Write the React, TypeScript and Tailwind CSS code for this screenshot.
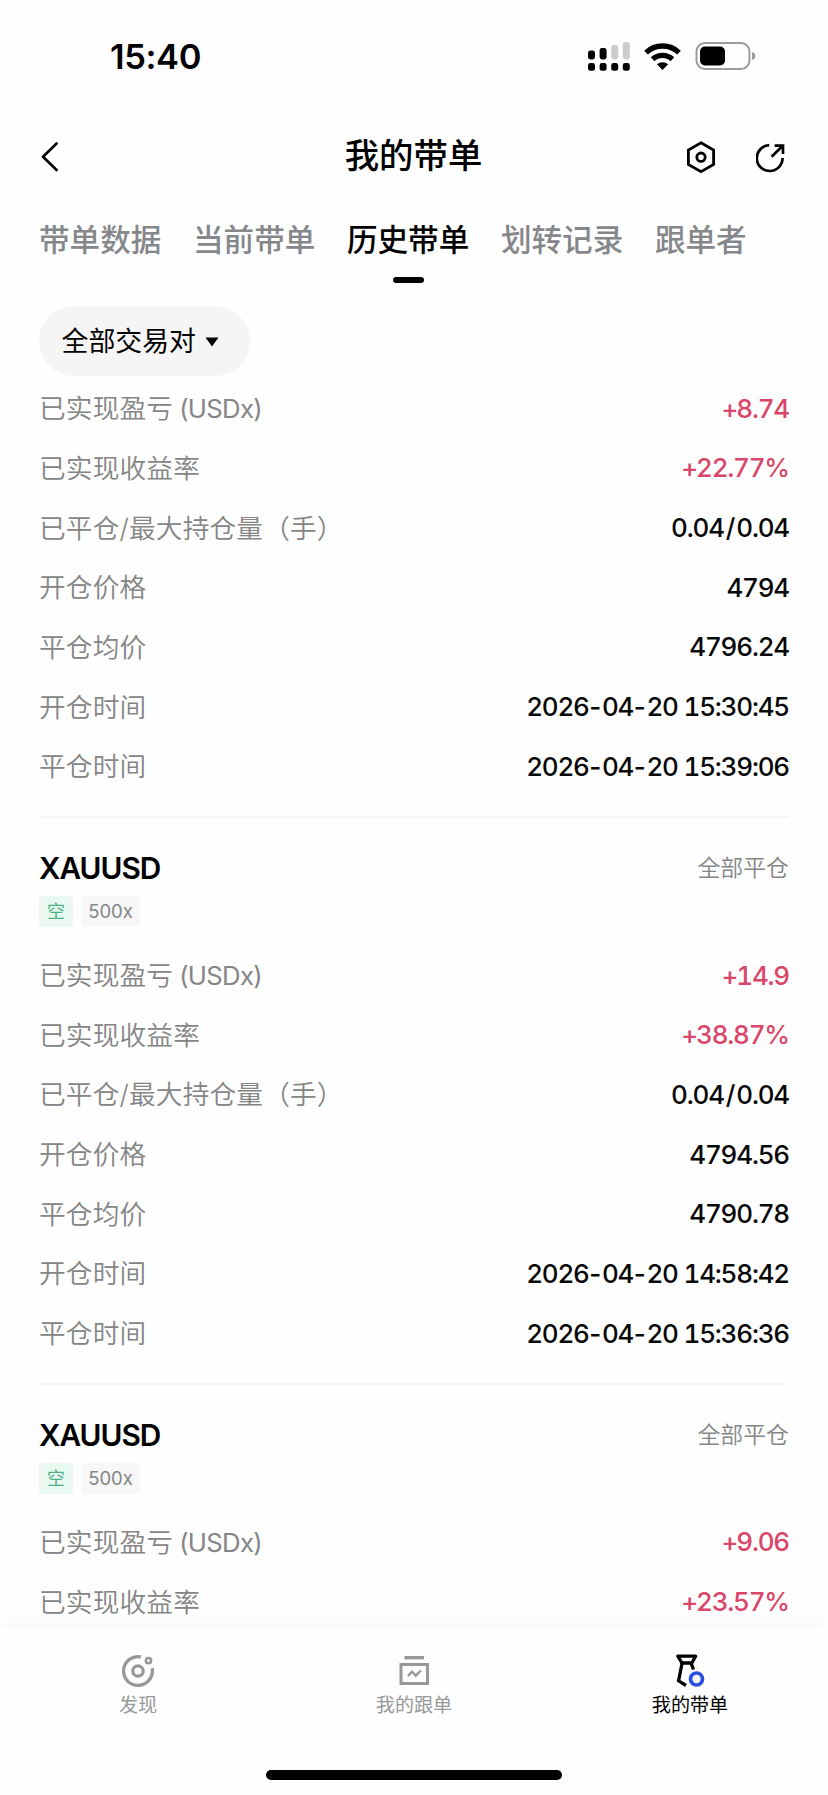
import React from "react";

const tabs = ["带单数据", "当前带单", "历史带单", "划转记录", "跟单者"];

const orders = [
  {
    symbol: "XAUUSD",
    side: "空",
    leverage: "500x",
    status: "全部平仓",
    pnl: "+8.74",
    roi: "+22.77%",
    volume: "0.04/0.04",
    openPrice: "4794",
    closePrice: "4796.24",
    openTime: "2026-04-20 15:30:45",
    closeTime: "2026-04-20 15:39:06",
  },
  {
    symbol: "XAUUSD",
    side: "空",
    leverage: "500x",
    status: "全部平仓",
    pnl: "+14.9",
    roi: "+38.87%",
    volume: "0.04/0.04",
    openPrice: "4794.56",
    closePrice: "4790.78",
    openTime: "2026-04-20 14:58:42",
    closeTime: "2026-04-20 15:36:36",
  },
  {
    symbol: "XAUUSD",
    side: "空",
    leverage: "500x",
    status: "全部平仓",
    pnl: "+9.06",
    roi: "+23.57%",
  },
];

type Order = (typeof orders)[number];

function StatusBar() {
  return (
    <div className="flex h-28 shrink-0 items-start justify-between pt-[33px] pr-[72px] pl-[110px]">
      <span className="text-[34.5px] leading-[48px] font-semibold tracking-[-0.4px]">
        15:40
      </span>
      <div className="flex h-[46px] items-center">
        <svg width="42" height="30" viewBox="0 0 42 30" className="mr-[14px]">
          <rect x="0" y="9.5" width="7" height="9" rx="2.4" />
          <rect x="11.6" y="7" width="7" height="11.5" rx="2.4" />
          <rect x="23.2" y="4" width="7" height="14.5" rx="2.4" fill="#cbcbcb" />
          <rect x="34.8" y="1" width="7" height="17.5" rx="2.4" fill="#cbcbcb" />
          <rect x="0" y="22" width="7" height="7.8" rx="2.4" />
          <rect x="11.6" y="22" width="7" height="7.8" rx="2.4" />
          <rect x="23.2" y="22" width="7" height="7.8" rx="2.4" />
          <rect x="34.8" y="22" width="7" height="7.8" rx="2.4" />
        </svg>
        <svg width="37" height="27" viewBox="0 0 37 27" className="mr-[14px]">
          <path
            d="M2 9.6a24 24 0 0 1 33 0M8.6 16.2a14.6 14.6 0 0 1 19.8 0"
            fill="none"
            stroke="#000"
            strokeWidth="5.4"
          />
          <path d="M18.5 27l-5.6-5.7a8.4 8.4 0 0 1 11.2 0z" />
        </svg>
        <svg width="61" height="28" viewBox="0 0 61 28">
          <rect x="1.5" y="1" width="53" height="26" rx="8.5" fill="none" stroke="#9b9b9b" strokeWidth="2" />
          <rect x="5" y="4.6" width="25" height="18.8" rx="5" />
          <path d="M57 10c4.6 1.2 4.6 6.8 0 8z" fill="#9b9b9b" />
        </svg>
      </div>
    </div>
  );
}

function Header() {
  return (
    <div className="grid h-[90px] shrink-0 grid-cols-3 items-center pr-[42px] pl-[41px]">
      <svg width="18" height="30" viewBox="0 0 18 30" fill="none" stroke="#000" strokeWidth="2.6" strokeLinecap="round" strokeLinejoin="round">
        <path d="M15.6 1.5L2 14.8L15.6 28" />
      </svg>
      <h1 className="pb-0.5 text-center text-[34.4px] leading-[48px] font-medium">我的带单</h1>
      <div className="flex items-center justify-end gap-[39px]">
        <svg width="32" height="34" viewBox="0 0 32 34" fill="none" stroke="#000" strokeWidth="2.8">
          <path d="M16 2.8L28.6 10V24.4L16 31.6L3.4 24.4V10Z" />
          <circle cx="16" cy="17.2" r="4.2" />
        </svg>
        <svg width="30" height="34" viewBox="0.8 0 30 34" fill="none" stroke="#000" strokeWidth="2.7">
          <path d="M14 5.2A12.9 12.9 0 1 0 27.4 18" />
          <path d="M16.4 16.8L27 6.2M19.4 5.6H27.8V14" />
        </svg>
      </div>
    </div>
  );
}

function Tabs() {
  return (
    <div className="flex h-[92px] shrink-0 gap-[31.6px] pt-[14.5px] pl-[39px]">
      {tabs.map((tab) => {
        const active = tab === "历史带单";
        return (
          <div key={tab} className="flex flex-col items-center">
            <span
              className={`text-[30.6px] leading-[46px] font-medium ${active ? "text-black" : "text-[#85878b]"}`}
            >
              {tab}
            </span>
            {active && <div className="mt-[14.5px] h-1.5 w-[31px] rounded-full bg-black" />}
          </div>
        );
      })}
    </div>
  );
}

// spacing of the signs that sit between the tabular digits
const signClass: Record<string, string> = {
  "-": "proportional-nums tracking-[0.6px] ml-[0.6px]",
  "/": "mx-0.5",
  "+": "tracking-[-2px]",
};

function Row({
  label,
  unit,
  value = "",
  red,
}: {
  label: string;
  unit?: string;
  value?: string;
  red?: boolean;
}) {
  return (
    <div className="flex h-[59.7px] items-center justify-between">
      <span className="text-[26.7px] font-[350] tracking-[0.15px] text-[#858585]">
        {label}
        {unit && <span className="ml-1.5 text-[25.7px] font-normal tracking-[-0.7px]">{unit}</span>}
      </span>
      <span
        className={`text-[26px] font-[450] tracking-[-1.2px] whitespace-pre tabular-nums ${red ? "text-[#d9466a]" : "text-[#080808]"}`}
      >
        {value.split(/([-+/])/).map((part, i) => (
          <span key={i} className={signClass[part]}>
            {part}
          </span>
        ))}
      </span>
    </div>
  );
}

function OrderHead({ order }: { order: Order }) {
  return (
    <div className="flex h-[127px] items-start justify-between pt-[29px]">
      <div>
        <h2 className="text-[29.8px] leading-[42px] font-semibold tracking-[-1px]">
          {order.symbol}
        </h2>
        <div className="mt-[7px] flex gap-2">
          <span className="flex h-[31px] w-[34px] items-center justify-center rounded-[3px] bg-[#eaf8f2] text-[18px] text-[#4db184]">
            {order.side}
          </span>
          <span className="flex h-[31px] w-[59px] items-center justify-center rounded-[5px] bg-[#f7f7f8] text-[18.5px] text-[#858585]">
            {order.leverage}
          </span>
        </div>
      </div>
      <span className="text-[22.9px] leading-[42px] font-[350] text-[#858585]">{order.status}</span>
    </div>
  );
}

function OrderRows({ order }: { order: Order }) {
  return (
    <div>
      <Row label="已实现盈亏" unit="(USDx)" value={order.pnl} red />
      <Row label="已实现收益率" value={order.roi} red />
      {order.volume && (
        <>
          <Row label="已平仓/最大持仓量（手）" value={order.volume} />
          <Row label="开仓价格" value={order.openPrice} />
          <Row label="平仓均价" value={order.closePrice} />
          <Row label="开仓时间" value={order.openTime} />
          <Row label="平仓时间" value={order.closeTime} />
        </>
      )}
    </div>
  );
}

function BottomNav() {
  return (
    <nav className="shrink-0 bg-[#fefefe] shadow-[0_-3px_14px_rgba(0,0,0,0.03)]">
      <div className="grid h-[143px] grid-cols-3 pt-[27px] text-[19.1px] leading-[28px] text-[#96989a]">
        <div className="flex flex-col items-center gap-[3px]">
          <svg width="34" height="34" viewBox="0 0 34 34" fill="none" stroke="#96989a" strokeWidth="3.3">
            <path d="M20 2.9A14.4 14.4 0 1 0 31.1 14.2" />
            <circle cx="17" cy="17" r="5.2" />
            <circle cx="27.5" cy="6.7" r="2.6" strokeWidth="2.5" />
          </svg>
          <span>发现</span>
        </div>
        <div className="flex flex-col items-center gap-[3px]">
          <svg width="34" height="34" viewBox="0 0 34 34" fill="none" stroke="#96989a" strokeWidth="3">
            <path d="M7.5 3.7H27" strokeWidth="3.4" />
            <rect x="4" y="10.5" width="26.5" height="19" />
            <path d="M11 22l4-4.3l3.8 4l5-5.2" strokeWidth="2.5" />
          </svg>
          <span>我的跟单</span>
        </div>
        <div className="flex flex-col items-center gap-[3px] text-black">
          <svg width="34" height="34" viewBox="0 0 34 34" fill="none" stroke="#000" strokeWidth="3.3">
            <path d="M4.8 2.2H22.6L18.8 9H9Z" strokeLinejoin="round" />
            <path d="M9.2 8.5L5.6 26.8L13 31.5M17.8 8.5L20.5 15.5" />
            <circle cx="23.5" cy="25" r="6" stroke="#2b50e0" strokeWidth="3.7" />
          </svg>
          <span>我的带单</span>
        </div>
      </div>
      <div className="h-[25px]">
        <div className="mx-auto h-[10px] w-[296px] rounded-full bg-black" />
      </div>
    </nav>
  );
}

export default function App() {
  return (
    <div className="flex h-[1795px] w-[828px] flex-col overflow-hidden bg-[#fefefe] font-['Inter','Noto_Sans_CJK_SC',sans-serif] text-black">
      <StatusBar />
      <Header />
      <Tabs />
      <div className="flex h-[84px] shrink-0 items-start pt-3 pl-[38.5px]">
        <button className="flex h-[70px] w-[211.5px] items-center gap-[9px] rounded-full bg-[#f5f5f5] pl-[23px] text-[26.9px]">
          全部交易对
          <svg width="14" height="10" viewBox="0 0 14 10" className="mt-0.5">
            <path d="M0.5 0.5H13.5L7 9.5Z" />
          </svg>
        </button>
      </div>
      <div className="min-h-0 flex-1 overflow-hidden pt-[0.4px] pr-[39px] pl-[39px]">
        {orders.map((order, i) => (
          <div key={i}>
            {i > 0 && (
              <>
                <div className="mt-5 h-0.5 bg-[#f6f6f6]" />
                <OrderHead order={order} />
              </>
            )}
            <OrderRows order={order} />
          </div>
        ))}
      </div>
      <BottomNav />
    </div>
  );
}
